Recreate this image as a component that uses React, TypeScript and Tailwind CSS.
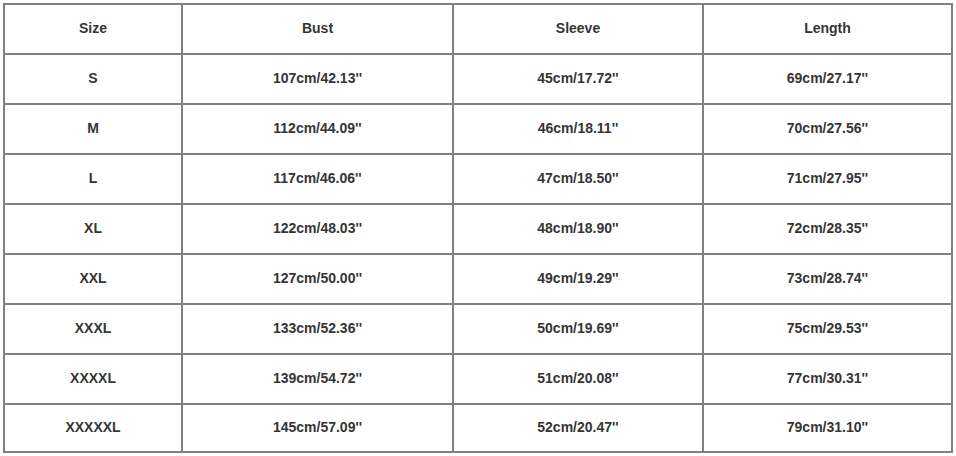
const headers = ["Size", "Bust", "Sleeve", "Length"];

const rows = [
  ["S", "107cm/42.13''", "45cm/17.72''", "69cm/27.17''"],
  ["M", "112cm/44.09''", "46cm/18.11''", "70cm/27.56''"],
  ["L", "117cm/46.06''", "47cm/18.50''", "71cm/27.95''"],
  ["XL", "122cm/48.03''", "48cm/18.90''", "72cm/28.35''"],
  ["XXL", "127cm/50.00''", "49cm/19.29''", "73cm/28.74''"],
  ["XXXL", "133cm/52.36''", "50cm/19.69''", "75cm/29.53''"],
  ["XXXXL", "139cm/54.72''", "51cm/20.08''", "77cm/30.31''"],
  ["XXXXXL", "145cm/57.09''", "52cm/20.47''", "79cm/31.10''"],
];

const Row = ({ cells, last }: { cells: string[]; last?: boolean }) => (
  <div
    className={
      "grid grid-cols-[178px_271px_250px_249px] " +
      (last ? "h-[48px]" : "h-[50px]")
    }
  >
    {cells.map((c, i) => (
      <div
        key={i}
        className="flex items-center justify-center pb-[2px] border-r-2 border-b-2 border-[#808080]"
      >
        {c}
      </div>
    ))}
  </div>
);

export default function App() {
  return (
    <div className="w-[956px] h-[456px] bg-white pt-[3px] pl-[3px]">
      <div
        className="w-[950px] border-t-2 border-l-2 border-[#808080] text-[14px] font-bold text-[#353535]"
        style={{ fontFamily: '"Liberation Sans", Arial, sans-serif' }}
      >
        <Row cells={headers} />
        {rows.map((r, i) => (
          <Row key={r[0]} cells={r} last={i === rows.length - 1} />
        ))}
      </div>
    </div>
  );
}
